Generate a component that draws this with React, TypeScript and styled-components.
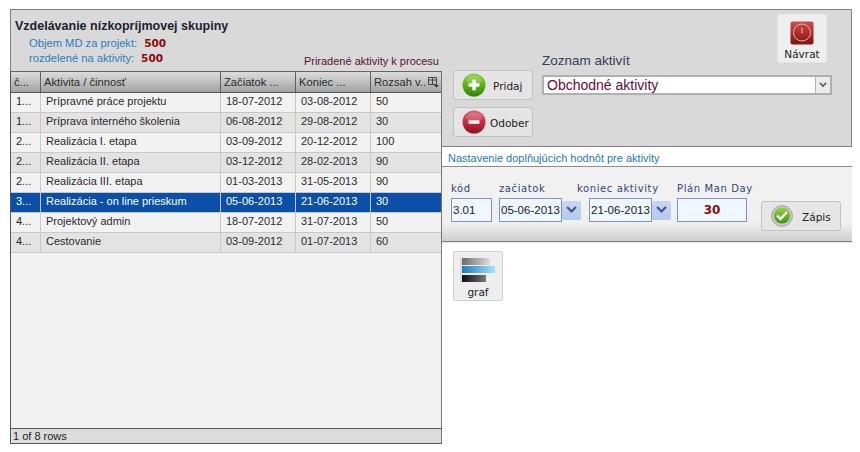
import React from "react";
import styled, { createGlobalStyle } from "styled-components";

const Global = createGlobalStyle`
  html, body { margin: 0; padding: 0; background: #fff; }
  body { font-family: "Liberation Sans", sans-serif; font-size: 11px; }
  * { box-sizing: border-box; }
`;
const UI = `"Liberation Sans", sans-serif`;
const WIDE = `"DejaVu Sans", sans-serif`;

const Page = styled.div`
  width: 860px; height: 452px; padding: 9px 0 0 10px; display: flex; align-items: flex-start; overflow: hidden;
`;
const LeftCol = styled.div`width: 432px; height: 435px; display: flex; flex-direction: column;`;
const Head = styled.div`
  height: 62px; background: #d9d9d9; border-top: 1px solid #808080; border-left: 1px solid #808080;
  padding: 8px 3px 0 4px; display: flex; flex-direction: column;
`;
const Title = styled.div`font: 700 12.5px/16px ${UI}; color: #1c2230; margin-bottom: 2px;`;
const StatRow = styled.div`display: flex; height: 15px; padding-left: 14px; font: 11.2px/15px ${UI}; color: #2b7cc0;`;
const StatValue = styled.b`font: 700 10.5px/15px ${WIDE}; color: #8a0a0a; margin-left: 7px;`;
const Assigned = styled.div`margin-top: -12px; text-align: right; font: 11px/14px ${UI}; color: #5b0f35;`;

const Grid = styled.div`
  flex: 1; width: 432px; display: flex; flex-direction: column; background: #f2f2f2;
  border: 1px solid #555; border-top: 1px solid #666; border-right: 1px solid #777;
`;
const HeaderRow = styled.div`
  display: grid; grid-template-columns: 30px 180px 75px 75px 69px; height: 21px; flex: none;
  background: linear-gradient(#dcdcdc, #c6c6c6 40%, #a2a2a2); border-bottom: 1px solid #555;
`;
const HeadCell = styled.div`
  font: 11.2px/20px ${UI}; color: #2b2b2b; padding: 0 1px 0 3px; border-right: 1px solid #5f5f5f; white-space: nowrap;
  display: flex; align-items: center; justify-content: space-between;
  &:last-child { border-right: 0; }
`;
const Row = styled.div<{ $alt: boolean; $sel: boolean }>`
  display: grid; grid-template-columns: 30px 180px 75px 75px 69px; height: 20px; flex: none;
  background: ${(p) => (p.$sel ? "#0a50a8" : p.$alt ? "#e3e3e3" : "#f2f2f2")};
  color: ${(p) => (p.$sel ? "#fff" : "#2a2a2a")};
  border-bottom: 1px solid #c8c8c8;
`;
const Cell = styled.div`
  font: 11px/16px ${UI}; padding-left: 5px; border-right: 1px solid #c8c8c8; white-space: nowrap; overflow: hidden;
  &:last-child { border-right: 0; }
`;
const Spacer = styled.div`flex: 1;`;
const Status = styled.div`
  height: 15px; flex: none; background: #dcdcdc; border-top: 1px solid #555; font: 11px/14px ${UI}; color: #222; padding-left: 2px;
`;

const RightCol = styled.div`width: 410px; display: flex; flex-direction: column;`;
const TopPanel = styled.div`
  height: 138px; background: #d9d9d9; border: 1px solid #808080; border-left: 0; display: flex; padding: 0 0 9px 11px; align-items: flex-end;
`;
const BtnCol = styled.div`display: flex; flex-direction: column; gap: 7px; width: 80px;`;
const IconBtn = styled.button`
  width: 80px; height: 30px; padding: 0 0 0 8px; display: flex; align-items: center; background: #e4e4e4;
  border: 1px solid #c2c2c2; border-radius: 3px; font: 10.5px ${WIDE}; color: #222;
`;
const BtnLabel = styled.span<{ $ml: number }>`margin-left: ${(p) => p.$ml}px; padding-top: 1px;`;
const ListCol = styled.div`margin-left: 9px; width: 290px; display: flex; flex-direction: column; align-self: stretch; padding-top: 4px;`;
const ListHead = styled.div`display: flex; justify-content: space-between; align-items: flex-end; padding-right: 5px;`;
const ListLabel = styled.div`font: 13.5px/16px ${UI}; color: #33405a; margin-bottom: 7px;`;
const Navrat = styled.button`
  width: 50px; height: 49px; padding: 6px 0 0; background: #eeeeee; border: 1px solid #e4e4e4; border-radius: 2px;
  display: flex; flex-direction: column; align-items: center; font: 10.5px/12px ${WIDE}; color: #222; gap: 3px; margin-bottom: 13px;
`;
const Select = styled.div`
  height: 20px; margin-top: -1px; border: 2px solid #b0b0b0; background: #fff;
  display: flex; justify-content: space-between; font: 14px/16px ${UI}; color: #6b0a35; padding-left: 3px;
`;
const SelectArrow = styled.div`width: 15px; background: #ececec; border-left: 1px solid #b4b4b4; display: flex; align-items: center; justify-content: center;`;

const SectionTitle = styled.div`height: 19px; padding-left: 6px; font: 11px/22px ${UI}; color: #2478b8;`;
const FormPanel = styled.div`
  height: 76px; border-top: 1px solid #8c8c8c; border-bottom: 1px solid #808080; display: flex; padding: 16px 0 0 9px; align-items: flex-start;
  background: linear-gradient(#f1f1f1, #f0f0f0 75%, #cfcfcf);
  box-shadow: 0 1px 0 #e8e8e8;
`;
const Field = styled.div<{ $ml: number }>`margin-left: ${(p) => p.$ml}px; display: flex; flex-direction: column;`;
const FieldLabel = styled.div<{ $shift?: number }>`
  font: 10px/12px ${WIDE}; letter-spacing: 0.6px; color: #34447a; height: 15px; width: 0; white-space: nowrap;
  margin-left: ${(p) => p.$shift ?? 0}px;
`;
const InputRow = styled.div`display: flex; align-items: center;`;
const TextBox = styled.div<{ $w: number; $bold?: boolean }>`
  width: ${(p) => p.$w}px; height: 24px; background: #f0f8ff; border: 1px solid #7f8fcf; padding-left: ${(p) => (p.$bold ? 0 : 1)}px;
  font: ${(p) => (p.$bold ? `700 12px/23px ${WIDE}` : `11.5px/23px ${UI}`)}; color: ${(p) => (p.$bold ? "#8a0a0a" : "#1a1a2a")};
  text-align: ${(p) => (p.$bold ? "center" : "left")}; white-space: nowrap;
`;
const DropBtn = styled.div`
  width: 19px; height: 19px; background: linear-gradient(#c8d6f4, #b4c8f2); border-radius: 2px; display: flex; align-items: center; justify-content: center;
`;
const SaveBtn = styled.button`
  margin: 18px 0 0 14px; width: 80px; height: 30px; background: #e6e6e6; border: 1px solid #c2c2c2; border-radius: 3px; display: flex; align-items: center;
  padding: 0 0 0 9px; font: 10.5px ${WIDE}; color: #222;
`;
const GraphBtn = styled.button`
  margin: 9px 0 0 11px; width: 50px; height: 50px; padding: 5px 0 0; background: #eeeeee; border: 1px solid #d0d0d0; border-radius: 2px;
  display: flex; flex-direction: column; align-items: center; font: 10.5px/13px ${WIDE}; color: #222; gap: 1px;
`;

const rows = [
  ["1...", "Prípravné práce projektu", "18-07-2012", "03-08-2012", "50"],
  ["1...", "Príprava interného školenia", "06-08-2012", "29-08-2012", "30"],
  ["2...", "Realizácia I. etapa", "03-09-2012", "20-12-2012", "100"],
  ["2...", "Realizácia II. etapa", "03-12-2012", "28-02-2013", "90"],
  ["2...", "Realizácia III. etapa", "01-03-2013", "31-05-2013", "90"],
  ["3...", "Realizácia - on line prieskum", "05-06-2013", "21-06-2013", "30"],
  ["4...", "Projektový admin", "18-07-2012", "31-07-2013", "50"],
  ["4...", "Cestovanie", "03-09-2012", "01-07-2013", "60"],
];

const RoundIcon = ({ id, c1, c2, c3, minus }: { id: string; c1: string; c2: string; c3: string; minus?: boolean }) => (
  <svg width="24" height="24" viewBox="0 0 24 24" style={{ flex: "none" }}>
    <defs>
      <linearGradient id={id} x1="0" y1="0" x2="0" y2="1">
        <stop offset="0" stopColor={c1} />
        <stop offset="0.55" stopColor={c2} />
        <stop offset="1" stopColor={c3} />
      </linearGradient>
    </defs>
    <circle cx="12" cy="12" r="11.5" fill={`url(#${id})`} />
    <ellipse cx="12" cy="7" rx="8" ry="4.5" fill="#fff" opacity="0.18" />
    <rect x="6.5" y="10.2" width="11" height="3.6" rx="1" fill="#fff" />
    {!minus && <rect x="10.2" y="6.5" width="3.6" height="11" rx="1" fill="#fff" />}
  </svg>
);

const PowerIcon = () => (
  <svg width="24" height="24" viewBox="0 0 24 24">
    <defs>
      <linearGradient id="pw" x1="0" y1="0" x2="0" y2="1">
        <stop offset="0" stopColor="#c8504a" />
        <stop offset="0.5" stopColor="#b02a28" />
        <stop offset="1" stopColor="#7c1412" />
      </linearGradient>
    </defs>
    <rect x="0.5" y="0.5" width="23" height="23" rx="2" fill="url(#pw)" />
    <circle cx="12" cy="11.5" r="8.5" fill="none" stroke="#e8b4b0" strokeWidth="1" />
    <line x1="12" y1="7" x2="12" y2="12.5" stroke="#eec8c4" strokeWidth="1" />
  </svg>
);

const CheckIcon = () => (
  <svg width="22" height="22" viewBox="0 0 22 22" style={{ flex: "none" }}>
    <defs>
      <linearGradient id="ck" x1="0" y1="0" x2="0" y2="1">
        <stop offset="0" stopColor="#9ad43c" />
        <stop offset="1" stopColor="#3f9418" />
      </linearGradient>
    </defs>
    <circle cx="11" cy="11" r="10.5" fill="#c6c6c6" />
    <circle cx="11" cy="11" r="10.5" fill="none" stroke="#8a8a8a" strokeWidth="0.6" />
    <circle cx="11" cy="10.5" r="8" fill="url(#ck)" />
    <path d="M6 10.5l3.5 3.5 6.5-7" fill="none" stroke="#fff" strokeWidth="2.4" />
  </svg>
);

const GraphIcon = () => (
  <svg width="36" height="28" viewBox="0 0 36 28">
    <defs>
      <linearGradient id="g1"><stop offset="0" stopColor="#6a6a6a" /><stop offset="1" stopColor="#dedede" /></linearGradient>
      <linearGradient id="g2"><stop offset="0" stopColor="#1c7cc0" /><stop offset="1" stopColor="#a4e4fa" /></linearGradient>
      <linearGradient id="g3"><stop offset="0" stopColor="#0c0c0c" /><stop offset="1" stopColor="#7a7a7a" /></linearGradient>
    </defs>
    <rect x="0" y="0" width="2" height="26" fill="#dcdcdc" />
    <rect x="2" y="1" width="28" height="7" fill="url(#g1)" />
    <rect x="2" y="9" width="33" height="7" fill="url(#g2)" />
    <rect x="2" y="18" width="24" height="7" fill="url(#g3)" />
  </svg>
);

const Chevron = ({ c = "#3c5a88", w = 11 }: { c?: string; w?: number }) => (
  <svg width={w} height={w * 0.7} viewBox="0 0 10 7">
    <path d="M1 1l4 4 4-4" fill="none" stroke={c} strokeWidth="2" />
  </svg>
);

const ColumnsIcon = () => (
  <svg width="11" height="11" viewBox="0 0 11 11" style={{ flex: "none" }}>
    <path d="M0.5 0.5h8v7h-8zM0.5 3h8M4.5 0.5v7" fill="none" stroke="#444" strokeWidth="1" />
    <path d="M6 8h5l-2.5 2.5z" fill="#333" />
  </svg>
);

export default function App() {
  return (
    <>
      <Global />
      <Page>
        <LeftCol>
          <Head>
            <Title>Vzdelávanie nízkopríjmovej skupiny</Title>
            <StatRow>Objem MD za projekt:<StatValue>500</StatValue></StatRow>
            <StatRow>rozdelené na aktivity:<StatValue>500</StatValue></StatRow>
            <Assigned>Priradené aktivity k procesu</Assigned>
          </Head>
          <Grid>
            <HeaderRow>
              <HeadCell>č...</HeadCell>
              <HeadCell>Aktivita / činnosť</HeadCell>
              <HeadCell>Začiatok ...</HeadCell>
              <HeadCell>Koniec ...</HeadCell>
              <HeadCell>Rozsah v..<ColumnsIcon /></HeadCell>
            </HeaderRow>
            {rows.map((r, i) => (
              <Row key={i} $alt={i % 2 === 1} $sel={i === 5}>
                <Cell>{r[0]}</Cell>
                <Cell>{r[1]}</Cell>
                <Cell>{r[2]}</Cell>
                <Cell>{r[3]}</Cell>
                <Cell>{r[4]}</Cell>
              </Row>
            ))}
            <Spacer />
            <Status>1 of 8 rows</Status>
          </Grid>
        </LeftCol>
        <RightCol>
          <TopPanel>
            <BtnCol>
              <IconBtn>
                <RoundIcon id="gp" c1="#8ed03a" c2="#58ae14" c3="#2f8208" />
                <BtnLabel $ml={7}>Pridaj</BtnLabel>
              </IconBtn>
              <IconBtn>
                <RoundIcon id="rm" c1="#e0606c" c2="#c42a3c" c3="#8c1020" minus />
                <BtnLabel $ml={4}>Odober</BtnLabel>
              </IconBtn>
            </BtnCol>
            <ListCol>
              <ListHead>
                <ListLabel>Zoznam aktivít</ListLabel>
                <Navrat><PowerIcon />Návrat</Navrat>
              </ListHead>
              <Select>
                Obchodné aktivity
                <SelectArrow><Chevron c="#556" w={8} /></SelectArrow>
              </Select>
            </ListCol>
          </TopPanel>
          <SectionTitle>Nastavenie doplňujúcich hodnôt pre aktivity</SectionTitle>
          <FormPanel>
            <Field $ml={0}>
              <FieldLabel>kód</FieldLabel>
              <TextBox $w={41}>3.01</TextBox>
            </Field>
            <Field $ml={7}>
              <FieldLabel>začiatok</FieldLabel>
              <InputRow><TextBox $w={63}>05-06-2013</TextBox><DropBtn><Chevron /></DropBtn></InputRow>
            </Field>
            <Field $ml={8}>
              <FieldLabel $shift={-12}>koniec aktivity</FieldLabel>
              <InputRow><TextBox $w={63}>21-06-2013</TextBox><DropBtn><Chevron /></DropBtn></InputRow>
            </Field>
            <Field $ml={6}>
              <FieldLabel>Plán Man Day</FieldLabel>
              <TextBox $w={70} $bold>30</TextBox>
            </Field>
            <SaveBtn><CheckIcon /><BtnLabel $ml={9}>Zápis</BtnLabel></SaveBtn>
          </FormPanel>
          <GraphBtn><GraphIcon />graf</GraphBtn>
        </RightCol>
      </Page>
    </>
  );
}
